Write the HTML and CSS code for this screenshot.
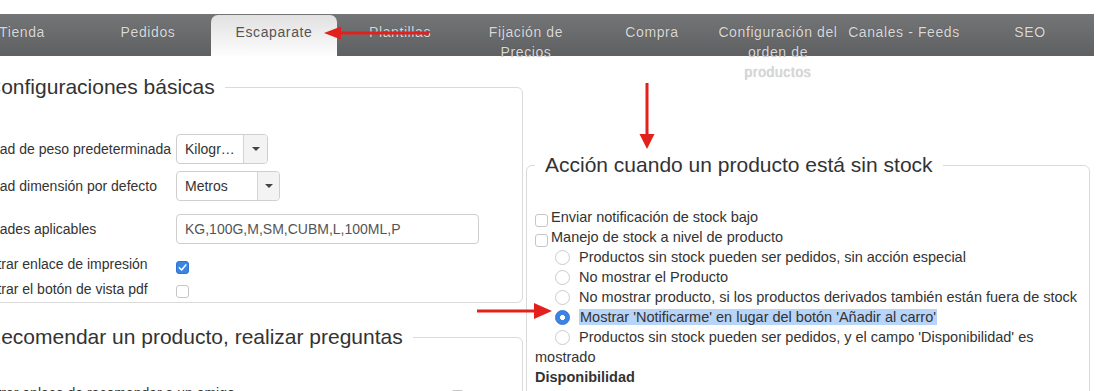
FILE: index.html
```html
<!DOCTYPE html>
<html lang="es">
<head>
<meta charset="utf-8">
<title>Escaparate</title>
<link rel="stylesheet" href="styles.css">
</head>
<body>
<nav class="tabs">
  <div class="tab">Tienda</div>
  <div class="tab">Pedidos</div>
  <div class="tab active">Escaparate</div>
  <div class="tab">Plantillas</div>
  <div class="tab">Fijación de<br>Precios</div>
  <div class="tab">Compra</div>
  <div class="tab">Configuración del<br>orden de<br>productos</div>
  <div class="tab">Canales - Feeds</div>
  <div class="tab">SEO</div>
</nav>

<main class="content">
  <div class="col-left">
    <fieldset class="box box-basic">
      <legend>Configuraciones básicas</legend>
      <div class="rows">
        <div class="row r1">
          <span class="lbl">Unidad de peso predeterminada</span>
          <div class="select sel-kg"><span class="sel-text">Kilogramos</span><span class="sel-btn"><i class="caret"></i></span></div>
        </div>
        <div class="row r2">
          <span class="lbl">Unidad dimensión por defecto</span>
          <div class="select sel-m"><span class="sel-text">Metros</span><span class="sel-btn"><i class="caret"></i></span></div>
        </div>
        <div class="row r3">
          <span class="lbl">Unidades aplicables</span>
          <div class="input">KG,100G,M,SM,CUBM,L,100ML,P</div>
        </div>
        <div class="row r4">
          <span class="lbl">Mostrar enlace de impresión</span>
          <span class="cb on"><svg viewBox="0 0 13 13" width="13" height="13"><path d="M3.3 6.8 L5.6 9 L9.8 3.9" fill="none" stroke="#fff" stroke-width="1.5" stroke-linecap="round" stroke-linejoin="round"/></svg></span>
        </div>
        <div class="row r5">
          <span class="lbl">Mostrar el botón de vista pdf</span>
          <span class="cb"></span>
        </div>
      </div>
    </fieldset>

    <fieldset class="box box-rec">
      <legend>Recomendar un producto, realizar preguntas</legend>
      <div class="rows rows-rec">
        <div class="row r4">
          <span class="lbl lbl-wide">Mostrar enlace de recomendar a un amigo</span>
          <span class="cb"></span>
        </div>
        <div class="row r5">
          <span class="lbl lbl-wide">Mostrar enlace de preguntas sobre el producto</span>
          <span class="cb"></span>
        </div>
      </div>
    </fieldset>
  </div>

  <div class="col-right">
    <fieldset class="box box-stock">
      <legend>Acción cuando un producto está sin stock</legend>
      <div class="stock">
        <div class="line"><span class="cb"></span>Enviar notificación de stock bajo</div>
        <div class="line"><span class="cb"></span>Manejo de stock a nivel de producto</div>
        <div class="line"><span class="rb"></span>Productos sin stock pueden ser pedidos, sin acción especial</div>
        <div class="line"><span class="rb"></span>No mostrar el Producto</div>
        <div class="line"><span class="rb"></span>No mostrar producto, si los productos derivados también están fuera de stock</div>
        <div class="line"><span class="rb on"></span><span class="hl">Mostrar 'Notificarme' en lugar del botón 'Añadir al carro'</span></div>
        <div class="line"><span class="rb"></span>Productos sin stock pueden ser pedidos, y el campo 'Disponibilidad' es mostrado</div>
        <div class="line strong">Disponibilidad</div>
        <div class="line">En stock</div>
      </div>
    </fieldset>
  </div>
</main>

<svg class="arrows" width="1100" height="391" viewBox="0 0 1100 391" aria-hidden="true">
  <g fill="#e2211c">
    <rect x="338" y="31.5" width="91" height="3"/>
    <polygon points="324,33 341,26.5 341,39.5"/>
    <rect x="645.5" y="83" width="3" height="53"/>
    <polygon points="647,149 639.5,134 654.5,134"/>
    <rect x="477" y="309.5" width="58" height="3"/>
    <polygon points="552,311 534,303 534,319"/>
  </g>
</svg>
</body>
</html>
```

FILE: styles.css
```css
* { box-sizing: border-box; }

html, body {
  margin: 0;
  padding: 0;
}

body {
  width: 1100px;
  height: 391px;
  overflow: hidden;
  position: relative;
  background: #fff;
  font-family: "Liberation Sans", Arial, Helvetica, sans-serif;
  font-size: 14px;
  color: #333;
}

/* ---------- tab bar ---------- */
.tabs {
  display: flex;
  width: 1135px;
  height: 42px;
  margin: 14px 0 0 -41px;
  background: linear-gradient(#747577, #5f6062);
}

.tab {
  flex: 0 0 126px;
  padding-top: 8px;
  text-align: center;
  white-space: nowrap;
  font-size: 14px;
  line-height: 20px;
  letter-spacing: 0.6px;
  color: #d9d9d9;
  text-shadow: 0 0 1px rgba(0, 0, 0, 0.3);
}

.tab.active {
  margin-top: 1px;
  padding-top: 7px;
  background: linear-gradient(#e1e1e1, #fdfdfd);
  border-radius: 7px 7px 0 0;
  color: #555;
  text-shadow: none;
}

/* ---------- layout ---------- */
.content {
  display: flex;
  align-items: flex-start;
  margin-left: -33px;
}

.col-left {
  flex: none;
  width: 556px;
}

.col-right {
  flex: none;
  width: 564px;
  margin-left: 3px;
  margin-top: 97px;
}

/* ---------- fieldsets ---------- */
.box {
  margin: 0;
  padding: 0;
  min-width: 0;
  border: 1px solid #dadada;
  border-radius: 6px;
}

.box legend {
  margin-left: 8px;
  padding: 0 10px;
  font-size: 21px;
  line-height: 24px;
  color: #333;
}

.box-basic { margin-top: 19px; }
.box-rec { margin-top: 22px; }

/* ---------- left form rows ---------- */
.rows {
  padding: 35px 0 3px 3px;
}

.rows-rec {
  padding: 24px 0 30px 3px;
}

.row {
  display: flex;
  align-items: center;
}

.lbl {
  flex: none;
  width: 205px;
  white-space: nowrap;
  line-height: 20px;
}

.lbl-wide { width: 480px; }

.r1 { height: 30px; }
.r2 { height: 30px; margin-top: 7px; }
.r3 { height: 30px; margin-top: 13px; }
.r4 { height: 20px; margin-top: 10px; align-items: flex-start; }
.r5 { height: 20px; margin-top: 5px; align-items: flex-start; }
.r4 .cb { margin-top: 7px; }
.r5 .cb { margin-top: 6px; }

.select {
  display: flex;
  height: 30px;
  border: 1px solid #cfcfcf;
  border-radius: 4px;
  background: #fff;
}

.sel-text {
  padding: 0 8px;
  line-height: 28px;
  overflow: hidden;
  white-space: nowrap;
  text-overflow: ellipsis;
}

.sel-kg .sel-text { width: 66px; }
.sel-m .sel-text { width: 80px; }

.sel-btn {
  display: flex;
  align-items: center;
  justify-content: center;
  width: 24px;
  border-left: 1px solid #d4d4d4;
  background: #f3f3f3;
  border-radius: 0 3px 3px 0;
}

.sel-m .sel-btn { width: 22px; }

.caret {
  width: 0;
  height: 0;
  border-left: 4px solid transparent;
  border-right: 4px solid transparent;
  border-top: 4px solid #444;
}

.input {
  width: 303px;
  height: 30px;
  padding-left: 8px;
  line-height: 28px;
  border: 1px solid #cfcfcf;
  border-radius: 4px;
  color: #555;
  white-space: nowrap;
}

/* ---------- checkboxes & radios ---------- */
.cb {
  display: inline-block;
  flex: none;
  width: 13px;
  height: 13px;
  border: 1px solid #c6c6c6;
  border-radius: 3px;
  background: #fff;
}

.cb svg {
  display: block;
  margin: -1px;
}

.cb.on {
  background: #3a84e2;
  border-color: #3074d2;
}

.rb {
  display: inline-block;
  width: 15px;
  height: 15px;
  margin: 0 9px 0 20px;
  vertical-align: -3px;
  border: 1px solid #cbcbcb;
  border-radius: 50%;
  background: #fff;
}

.rb.on {
  border-color: #3273d6;
  background: radial-gradient(circle, #fff 0 2.2px, #3b84e6 2.8px);
}

/* ---------- right stock panel ---------- */
.stock {
  padding: 30px 4px 40px 8px;
  font-size: 14.5px;
  line-height: 20px;
}

.stock .cb {
  vertical-align: -5px;
  margin-right: 3px;
}

.hl {
  padding: 0 1px;
  background: #b8d4f7;
}

.strong { font-weight: bold; }

/* ---------- annotation arrows ---------- */
.arrows {
  position: absolute;
  left: 0;
  top: 0;
  pointer-events: none;
}
```
